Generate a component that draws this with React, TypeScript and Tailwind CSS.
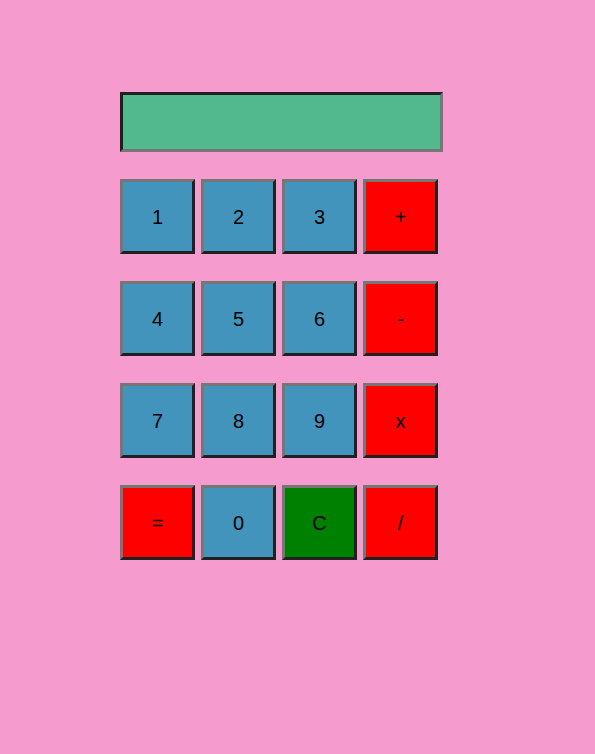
import React, { useState } from 'react';

type Key = { label: string; color: string };

const keys: Key[] = [
  { label: '1', color: 'bg-[#4394bc]' },
  { label: '2', color: 'bg-[#4394bc]' },
  { label: '3', color: 'bg-[#4394bc]' },
  { label: '+', color: 'bg-[#ff0000]' },
  { label: '4', color: 'bg-[#4394bc]' },
  { label: '5', color: 'bg-[#4394bc]' },
  { label: '6', color: 'bg-[#4394bc]' },
  { label: '-', color: 'bg-[#ff0000]' },
  { label: '7', color: 'bg-[#4394bc]' },
  { label: '8', color: 'bg-[#4394bc]' },
  { label: '9', color: 'bg-[#4394bc]' },
  { label: 'x', color: 'bg-[#ff0000]' },
  { label: '=', color: 'bg-[#ff0000]' },
  { label: '0', color: 'bg-[#4394bc]' },
  { label: 'C', color: 'bg-[#008000]' },
  { label: '/', color: 'bg-[#ff0000]' },
];

const App: React.FC = () => {
  const [display, setDisplay] = useState('');

  const press = (label: string) => {
    if (label === 'C') return setDisplay('');
    if (label === '=') {
      try {
        // eslint-disable-next-line no-new-func
        const result = Function(`return (${display.replace(/x/g, '*')})`)();
        setDisplay(String(result));
      } catch {
        setDisplay('');
      }
      return;
    }
    setDisplay(display + label);
  };

  return (
    <div className="min-h-[754px] w-full bg-[#f59bce] pt-[92px] pl-[120px] font-['Liberation_Sans',Arial,sans-serif]">
      <input
        value={display}
        readOnly
        className="block h-[60px] w-[323px] border-[3px] border-t-[#202020] border-l-[#202020] border-b-[#767676] border-r-[#767676] bg-[#52b98f] px-2 text-[20px] text-black outline-none"
      />
      <div className="mt-[27px] grid w-max grid-cols-[repeat(4,75px)] gap-x-[6px] gap-y-[27px]">
        {keys.map((k) => (
          <button
            key={k.label}
            onClick={() => press(k.label)}
            className={`flex h-[75px] w-[75px] items-center justify-center border-[3px] border-t-[#767676] border-l-[#767676] border-b-[#202020] border-r-[#202020] text-[20px] text-black ${k.color}`}
          >
            {k.label}
          </button>
        ))}
      </div>
    </div>
  );
};

export default App;
